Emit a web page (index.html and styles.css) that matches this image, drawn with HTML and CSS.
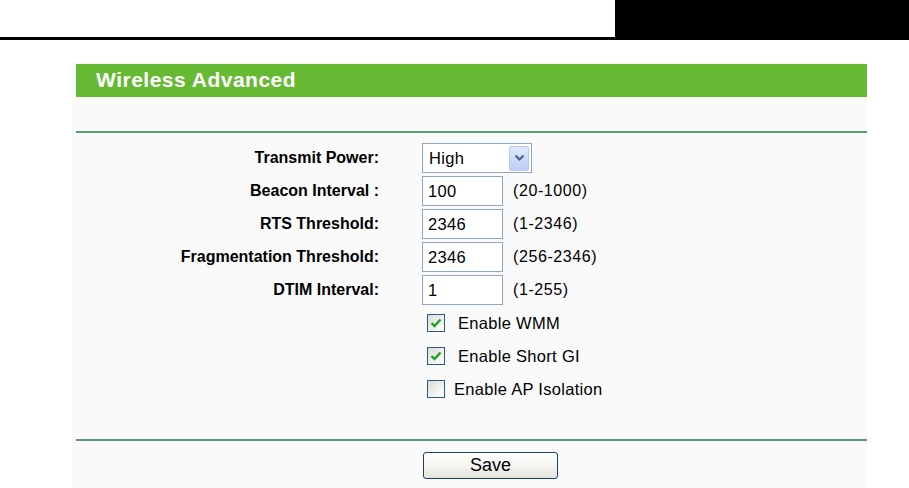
FILE: index.html
```html
<!DOCTYPE html>
<html>
<head>
<meta charset="utf-8">
<link rel="stylesheet" href="styles.css">
</head>
<body>
<div class="topbar">
  <div class="topbar-fill"></div>
  <div class="topbar-block"></div>
</div>
<div class="panel">
  <div class="title">Wireless Advanced</div>
  <div class="title-gap"></div>
  <div class="rule"></div>
  <div class="form">
    <div class="label">Transmit Power:</div>
    <div class="field">
      <div class="select">
        <span class="select-text">High</span>
        <span class="select-btn">
          <svg width="11" height="8" viewBox="0 0 11 8"><path d="M1.5 1.5 L5.5 5.5 L9.5 1.5" fill="none" stroke="#4d6185" stroke-width="2.2"/></svg>
        </span>
      </div>
    </div>

    <div class="label">Beacon Interval :</div>
    <div class="field"><div class="input">100</div><span class="hint">(20-1000)</span></div>

    <div class="label">RTS Threshold:</div>
    <div class="field"><div class="input">2346</div><span class="hint">(1-2346)</span></div>

    <div class="label">Fragmentation Threshold:</div>
    <div class="field"><div class="input">2346</div><span class="hint">(256-2346)</span></div>

    <div class="label">DTIM Interval:</div>
    <div class="field"><div class="input">1</div><span class="hint">(1-255)</span></div>

    <div class="label empty"></div>
    <div class="field check-row">
      <span class="box"><svg width="12" height="10" viewBox="0 0 12 10"><path d="M1.5 5 L4.5 8 L10.5 1.5" fill="none" stroke="#21a121" stroke-width="2.4"/></svg></span>
      <span class="check-label wide">Enable WMM</span>
    </div>

    <div class="label empty"></div>
    <div class="field check-row">
      <span class="box"><svg width="12" height="10" viewBox="0 0 12 10"><path d="M1.5 5 L4.5 8 L10.5 1.5" fill="none" stroke="#21a121" stroke-width="2.4"/></svg></span>
      <span class="check-label wide">Enable Short GI</span>
    </div>

    <div class="label empty"></div>
    <div class="field check-row">
      <span class="box"></span>
      <span class="check-label">Enable AP Isolation</span>
    </div>
  </div>
  <div class="rule"></div>
  <div class="actions">
    <button class="save">Save</button>
  </div>
</div>
</body>
</html>
```
FILE: styles.css
```css
html, body {
  margin: 0;
  padding: 0;
  background: #ffffff;
  font-family: "Liberation Sans", Arial, sans-serif;
  color: #000;
}

.topbar {
  display: flex;
  height: 37px;
  border-bottom: 3px solid #000;
}
.topbar-fill { flex: 1; }
.topbar-block {
  width: 294px;
  background: #000;
}

.panel {
  margin: 22px 0 0 72px;
  width: 791px;
  padding: 2px 0 0 4px;
  background: #fafafa;
  min-height: 430px;
}

.title {
  height: 33px;
  line-height: 32px;
  background: #66b933;
  color: #fff;
  font-weight: bold;
  font-size: 21px;
  padding-left: 20px;
  letter-spacing: 0.5px;
}
.title-gap { height: 34px; }

.rule {
  height: 2px;
  background: #5a9c73;
}

.form {
  display: grid;
  grid-template-columns: 303px auto;
  column-gap: 43px;
  row-gap: 3px;
  grid-auto-rows: 30px;
  padding: 10px 0 35px 0;
}
.form .check-row { height: 31px; }

.label {
  display: flex;
  align-items: center;
  justify-content: flex-end;
  font-weight: bold;
  font-size: 16px;
}

.field {
  display: flex;
  align-items: center;
  font-size: 16px;
}

.select {
  box-sizing: border-box;
  width: 110px;
  height: 30px;
  border: 1px solid #8fa7c6;
  background: #fff;
  display: flex;
  align-items: center;
  justify-content: space-between;
  padding: 0 2px 0 6px;
}
.select-text { font-size: 16.5px; letter-spacing: 0.3px; }
.select-btn {
  box-sizing: border-box;
  width: 20px;
  height: 25px;
  border: 1px solid #b6c9ef;
  border-radius: 2px;
  background: linear-gradient(#dfe8fd, #bccdf6);
  display: flex;
  align-items: center;
  justify-content: center;
}

.input {
  box-sizing: border-box;
  width: 81px;
  height: 30px;
  border: 1px solid #8fa7c6;
  background: #fff;
  padding: 0 5px;
  display: flex;
  align-items: center;
  font-size: 16.5px;
  letter-spacing: 0.3px;
}

.hint {
  margin-left: 10px;
  font-size: 16px;
  letter-spacing: 0.6px;
}

.check-row {
  padding-left: 5px;
  align-self: center;
}
.box {
  box-sizing: border-box;
  width: 18px;
  height: 18px;
  border: 1px solid #2d5a8a;
  background: linear-gradient(135deg, #dcdcd6, #ffffff);
  display: flex;
  align-items: center;
  justify-content: center;
}
.check-label {
  margin-left: 9px;
  font-size: 16.5px;
  letter-spacing: 0.3px;
}
.check-label.wide { margin-left: 13px; }

.actions {
  padding: 11px 0 10px 347px;
}
.save {
  box-sizing: border-box;
  width: 135px;
  height: 27px;
  border: 1px solid #1e3f73;
  border-radius: 3px;
  background: linear-gradient(#ffffff, #f3f3ef 60%, #e3e2da);
  font-family: "Liberation Sans", Arial, sans-serif;
  font-size: 18px;
  color: #000;
  padding: 0;
}
```
